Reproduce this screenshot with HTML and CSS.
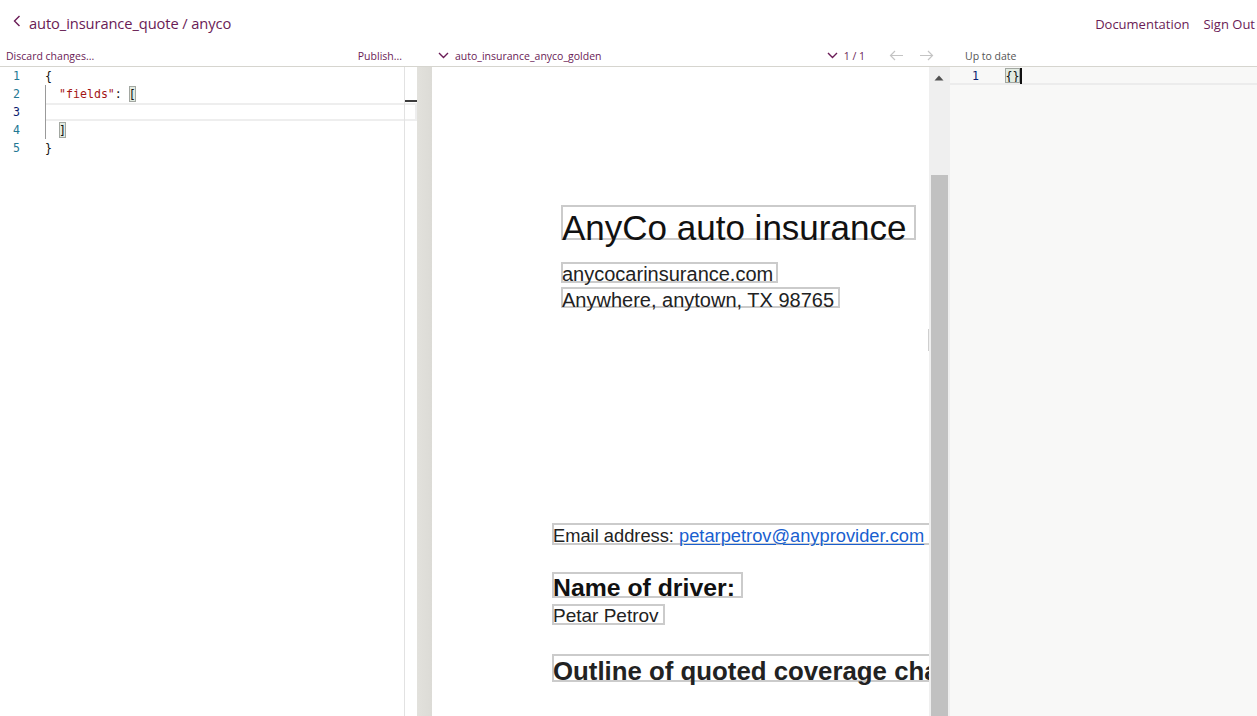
FILE: index.html
```html
<!DOCTYPE html>
<html lang="en">
<head>
<meta charset="utf-8">
<title>auto_insurance_quote / anyco</title>
<link rel="stylesheet" href="styles.css">
</head>
<body>
<header class="topbar">
  <a class="crumb" href="#">
    <svg class="chev-left" width="8" height="12" viewBox="0 0 8 12"><polyline points="6.5,1 1.5,6 6.5,11" fill="none" stroke="currentColor" stroke-width="1.4"/></svg>
    <span>auto_insurance_quote / anyco</span>
  </a>
  <nav class="links">
    <a href="#">Documentation</a>
    <a href="#">Sign Out</a>
  </nav>
</header>

<div class="toolbar">
  <div class="tb-left">
    <a href="#">Discard changes...</a>
    <a href="#">Publish...</a>
  </div>
  <div class="tb-mid">
    <div class="doc-select">
      <svg width="11" height="7" viewBox="0 0 11 7"><polyline points="1,1 5.5,5.5 10,1" fill="none" stroke="currentColor" stroke-width="1.4"/></svg>
      <span>auto_insurance_anyco_golden</span>
    </div>
    <div class="pager">
      <svg width="11" height="7" viewBox="0 0 11 7"><polyline points="1,1 5.5,5.5 10,1" fill="none" stroke="currentColor" stroke-width="1.4"/></svg>
      <span class="count">1 / 1</span>
      <svg class="arrow" width="15" height="11" viewBox="0 0 15 11"><path d="M14 5.5H1.5M6 1L1.5 5.5L6 10" fill="none" stroke="currentColor" stroke-width="1.2"/></svg>
      <svg class="arrow" width="15" height="11" viewBox="0 0 15 11"><path d="M1 5.5H13.5M9 1L13.5 5.5L9 10" fill="none" stroke="currentColor" stroke-width="1.2"/></svg>
    </div>
  </div>
  <div class="tb-right">Up to date</div>
</div>

<main class="panes">
  <section class="editor">
    <div class="line"><span class="ln">1</span><span class="code">{</span></div>
    <div class="line"><span class="ln">2</span><span class="code"><span class="guide"></span><span class="str">"fields"</span><span class="punc">: </span><span class="bm">[</span></span></div>
    <div class="line current"><span class="ln active">3</span><span class="code"><span class="guide"></span></span></div>
    <div class="line"><span class="ln">4</span><span class="code"><span class="guide"></span><span class="bm">]</span></span></div>
    <div class="line"><span class="ln">5</span><span class="code">}</span></div>
    <div class="ruler"><span class="ruler-mark"></span></div>
  </section>

  <div class="splitter"></div>

  <section class="doc">
    <div class="pbox p-title">AnyCo auto insurance</div>
    <div class="pbox p-site">anycocarinsurance.com</div>
    <div class="pbox p-addr">Anywhere, anytown, TX 98765</div>
    <div class="pbox p-email">Email address: <a href="#">petarpetrov@anyprovider.com</a></div>
    <div class="pbox p-name">Name of driver:</div>
    <div class="pbox p-driver">Petar Petrov</div>
    <div class="pbox p-outline">Outline of quoted coverage changes</div>
    <div class="handle"></div>
  </section>

  <div class="vscroll">
    <svg class="up" width="10" height="6" viewBox="0 0 10 6"><polygon points="5,0.5 9.5,5.5 0.5,5.5" fill="#505050"/></svg>
    <div class="thumb"></div>
  </div>

  <section class="result">
    <div class="line current"><span class="ln active">1</span><span class="code"><span class="bm">{}</span><span class="cursor"></span></span></div>
  </section>
</main>
</body>
</html>
```

FILE: styles.css
```css
* { box-sizing: border-box; }
html, body { margin: 0; padding: 0; }
body {
  width: 1257px;
  height: 716px;
  overflow: hidden;
  background: #ffffff;
  font-family: "Open Sans", "Noto Sans", sans-serif;
  color: #222;
}
a { text-decoration: none; color: inherit; }

.topbar {
  height: 45px;
  display: flex;
  align-items: center;
  justify-content: space-between;
  padding: 0 2px 0 13px;
  color: #6a1b56;
}
.crumb {
  display: flex;
  align-items: center;
  gap: 8px;
  font-size: 14.7px;
  letter-spacing: -0.1px;
}
.chev-left { margin-top: -3px; }
.links {
  display: flex;
  gap: 14px;
  font-size: 13px;
  padding-top: 2px;
}

.toolbar {
  height: 22px;
  display: grid;
  grid-template-columns: 432px 518px 1fr;
  border-bottom: 1px solid #d6d5cf;
  font-size: 10.5px;
  color: #6a1b56;
}
.tb-left {
  display: flex;
  justify-content: space-between;
  align-items: center;
  padding: 0 30px 0 6px;
}
.tb-mid {
  display: flex;
  justify-content: space-between;
  align-items: center;
  padding: 0 16px 0 6px;
}
.doc-select, .pager {
  display: flex;
  align-items: center;
  gap: 6px;
}
.pager .count { margin-right: 18px; }
.pager .arrow { color: #c4c4c4; margin-left: 0; }
.pager .arrow + .arrow { margin-left: 9px; }
.tb-right {
  display: flex;
  align-items: center;
  padding-left: 15px;
  color: #555;
}

.panes {
  height: 649px;
  display: grid;
  grid-template-columns: 417px 15px 497px 21px 1fr;
}

.editor, .result {
  position: relative;
  font-family: "DejaVu Sans Mono", "Liberation Mono", monospace;
  font-size: 11.6px;
  color: #111;
}
.line {
  height: 18px;
  line-height: 18px;
  display: flex;
  white-space: pre;
}
.ln {
  width: 20px;
  text-align: right;
  color: #237893;
  flex: none;
}
.ln.active { color: #0b216f; }
.code {
  flex: 1;
  display: flex;
  align-items: stretch;
  margin-left: 25px;
}
.editor .line.current .code {
  border-top: 2px solid #eeeeee;
  border-bottom: 2px solid #eeeeee;
  border-right: 2px solid #eeeeee;
}
.editor .line.current .guide { margin-top: -2px; margin-bottom: -2px; }
.guide {
  width: 14px;
  flex: none;
  border-left: 1px solid #9a9a9a;
}
.str { color: #a31515; }
.punc { color: #111; }
.bm {
  background: #e2ebe1;
  outline: 1px solid #a2a7a1;
  outline-offset: -1px;
  height: 16px;
  line-height: 16px;
  margin-top: 1px;
}
.ruler {
  position: absolute;
  top: 0;
  right: 0;
  bottom: 0;
  width: 13px;
  border-left: 1px solid #e2e2e2;
}
.ruler-mark {
  position: absolute;
  left: 0;
  right: 0;
  top: 33px;
  height: 2px;
  background: #3c3c3c;
}

.splitter {
  background: linear-gradient(to right, #e2e1dc, #dcdbd6);
}

.doc {
  position: relative;
  overflow: hidden;
  background: #ffffff;
  font-family: "Liberation Sans", Arial, sans-serif;
  color: #111;
}
.pbox {
  position: absolute;
  border: 2px solid #cbcbcb;
  white-space: nowrap;
  overflow: visible;
  text-indent: -1px;
}
.p-title { left: 129px; top: 138px; width: 355px; height: 35px; font-size: 35px; line-height: 42px; color: #111; }
.p-site { left: 129px; top: 195px; width: 217px; height: 21px; font-size: 20px; line-height: 20px; color: #222; }
.p-addr { left: 129px; top: 220px; width: 279px; height: 21px; font-size: 20px; line-height: 22px; color: #222; }
.p-email { left: 120px; top: 456px; width: 420px; height: 22px; font-size: 18.3px; line-height: 21px; color: #222; }
.p-email a { color: #1a5fcf; text-decoration: underline; text-underline-offset: 2px; }
.p-name { left: 120px; top: 505px; width: 191px; height: 26px; font-size: 24.8px; line-height: 27px; font-weight: bold; color: #111; }
.p-driver { left: 120px; top: 537px; width: 113px; height: 21px; font-size: 19px; line-height: 20px; color: #222; overflow: hidden; }
.p-outline { left: 120px; top: 587px; width: 460px; height: 28px; font-size: 25.8px; line-height: 30px; font-weight: bold; color: #222; }
.handle {
  position: absolute;
  left: 496px;
  top: 262px;
  width: 2px;
  height: 22px;
  background: #cfcfcf;
}

.vscroll {
  position: relative;
  background: #efefef;
}
.vscroll .up {
  position: absolute;
  left: 5px;
  top: 8px;
}
.thumb {
  position: absolute;
  left: 2px;
  right: 2px;
  top: 108px;
  bottom: 0;
  background: #c1c1c1;
}

.result {
  background: #f8f8f7;
}
.result .ln { width: 29px; }
.result .code { margin-left: 26px; }
.result .line.current {
  border-bottom: 2px solid #ececec;
}
.result .bm { height: 15px; margin-top: 1px; padding: 0 0.5px; }
.cursor {
  width: 2px;
  height: 16px;
  margin-top: 1px;
  background: #111;
}
```
